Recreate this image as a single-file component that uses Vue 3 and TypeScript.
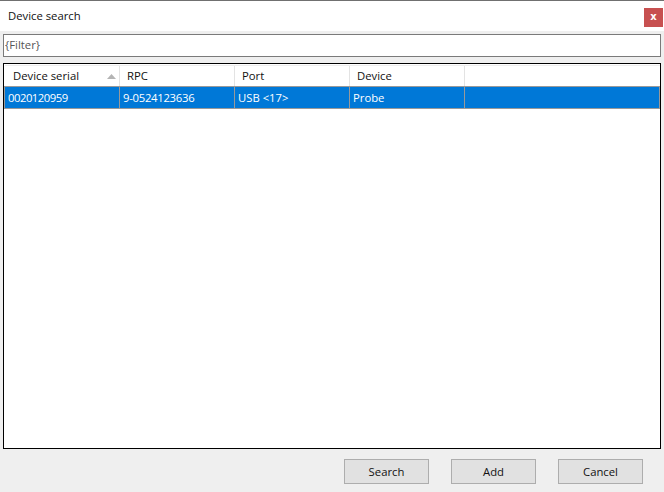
<script setup lang="ts">
import { ref } from 'vue';

interface DeviceRow {
  serial: string;
  rpc: string;
  port: string;
  device: string;
}

const filter = ref('');
const columns = ['Device serial', 'RPC', 'Port', 'Device'];
const rows = ref<DeviceRow[]>([
  { serial: '0020120959', rpc: '9-0524123636', port: 'USB <17>', device: 'Probe' },
]);
</script>

<template>
  <div class="dialog">
    <div class="titlebar">
      <span class="title">Device search</span>
      <button class="close">x</button>
    </div>

    <input v-model="filter" class="filter" placeholder="{Filter}" />

    <div class="list">
      <div class="head">
        <div v-for="(col, i) in columns" :key="col" class="head-cell">
          {{ col }}
          <svg v-if="i === 0" class="sort" width="9" height="5" viewBox="0 0 9 5">
            <path d="M4.5 0L9 5H0z" fill="#b4b4b4" />
          </svg>
        </div>
        <div class="head-cell last"></div>
      </div>
      <div v-for="row in rows" :key="row.serial" class="row">
        <div class="cell serial">{{ row.serial }}</div>
        <div class="cell rpc">{{ row.rpc }}</div>
        <div class="cell">{{ row.port }}</div>
        <div class="cell">{{ row.device }}</div>
        <div class="cell last"></div>
      </div>
    </div>

    <div class="footer">
      <button class="btn">Search</button>
      <button class="btn">Add</button>
      <button class="btn">Cancel</button>
    </div>
  </div>
</template>

<style scoped>
.dialog {
  width: 664px;
  height: 492px;
  box-sizing: border-box;
  background: #efefef;
  border-top: 1px solid #707070;
  display: flex;
  flex-direction: column;
  font-family: "Open Sans", "Noto Sans", sans-serif;
  font-size: 11.3px;
  color: #111;
}

.titlebar {
  height: 30px;
  background: #fff;
  display: flex;
  align-items: flex-start;
  justify-content: space-between;
  padding: 7px 1px 0 8px;
  box-sizing: border-box;
}

.title {
  line-height: 16px;
}

.close {
  width: 19px;
  height: 19px;
  padding: 0 0 2px;
  border: none;
  background: #c75050;
  color: #fff;
  font-family: "DejaVu Sans", sans-serif;
  font-size: 10px;
  font-weight: bold;
  line-height: 1;
}

.filter {
  display: block;
  flex: none;
  width: 658px;
  height: 23px;
  margin: 3px 0 0 3px;
  padding: 0 1px 2px;
  box-sizing: border-box;
  border: 1px solid #7a7a7a;
  border-radius: 0;
  outline: none;
  background: #fff;
  font: inherit;
  color: #111;
}

.filter::placeholder {
  color: #555;
  opacity: 1;
}

.list {
  width: 658px;
  height: 386px;
  margin: 6px 0 0 3px;
  padding-top: 1px;
  box-sizing: border-box;
  flex: none;
  border: 1px solid #000;
  background: #fff;
}

.head {
  display: grid;
  grid-template-columns: 115px 115px 115px 115px 1fr;
  height: 21px;
  margin-left: 1px;
  border-top: 1px solid #ececec;
  box-sizing: border-box;
}

.head-cell {
  position: relative;
  padding-left: 7px;
  line-height: 20px;
  border-right: 1px solid #e3e3e3;
}

.head-cell:first-child {
  padding-left: 8px;
}

.head-cell.last {
  border-right: none;
}

.sort {
  position: absolute;
  right: 3px;
  top: 8px;
}

.row {
  display: grid;
  grid-template-columns: 115px 115px 115px 115px 1fr;
  height: 23px;
  box-sizing: border-box;
  background: #0078d7;
  border: 1px solid #999;
  color: #fff;
}

.cell {
  padding-left: 3px;
  line-height: 21px;
  border-right: 1px solid #999;
}

.cell.serial {
  letter-spacing: -0.5px;
}

.cell.rpc {
  letter-spacing: -0.28px;
}

.cell.last {
  border-right: none;
}

.footer {
  display: flex;
  justify-content: flex-end;
  gap: 22px;
  padding: 10px 21px 0 0;
}

.btn {
  width: 85px;
  height: 25px;
  padding: 0;
  box-sizing: border-box;
  border: 1px solid #adadad;
  border-radius: 0;
  background: #e1e1e1;
  font: inherit;
  color: #111;
}
</style>
